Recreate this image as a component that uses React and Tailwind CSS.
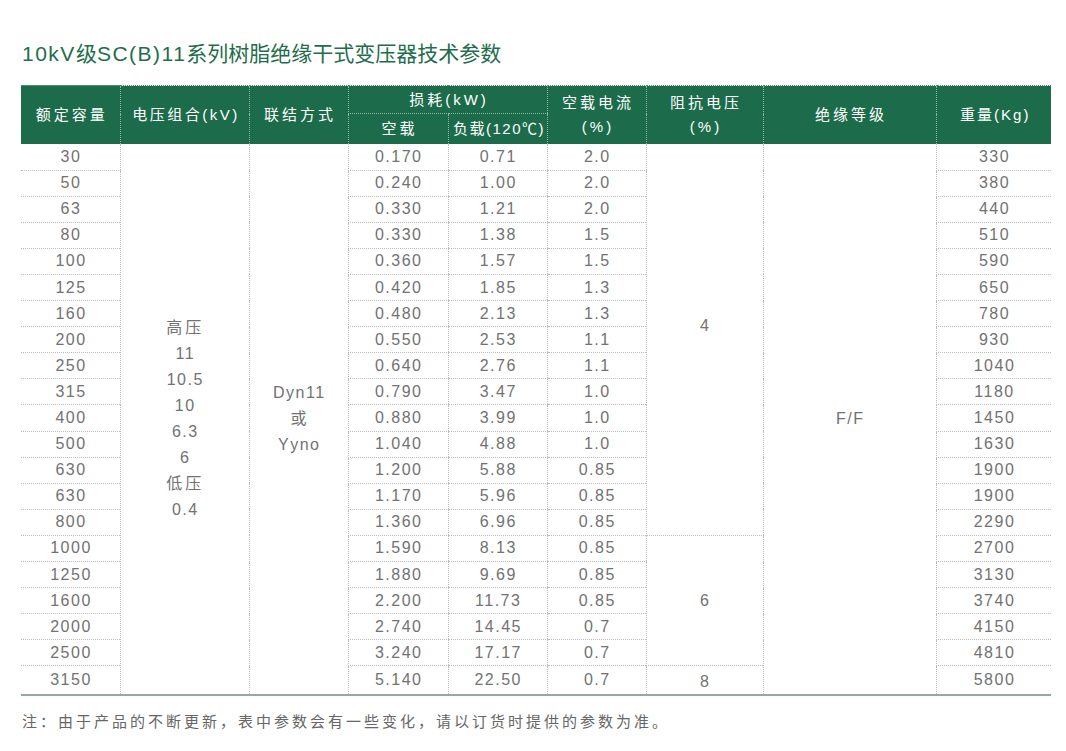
import React from "react";

const rows = [
  ["30", "0.170", "0.71", "2.0", "330"],
  ["50", "0.240", "1.00", "2.0", "380"],
  ["63", "0.330", "1.21", "2.0", "440"],
  ["80", "0.330", "1.38", "1.5", "510"],
  ["100", "0.360", "1.57", "1.5", "590"],
  ["125", "0.420", "1.85", "1.3", "650"],
  ["160", "0.480", "2.13", "1.3", "780"],
  ["200", "0.550", "2.53", "1.1", "930"],
  ["250", "0.640", "2.76", "1.1", "1040"],
  ["315", "0.790", "3.47", "1.0", "1180"],
  ["400", "0.880", "3.99", "1.0", "1450"],
  ["500", "1.040", "4.88", "1.0", "1630"],
  ["630", "1.200", "5.88", "0.85", "1900"],
  ["630", "1.170", "5.96", "0.85", "1900"],
  ["800", "1.360", "6.96", "0.85", "2290"],
  ["1000", "1.590", "8.13", "0.85", "2700"],
  ["1250", "1.880", "9.69", "0.85", "3130"],
  ["1600", "2.200", "11.73", "0.85", "3740"],
  ["2000", "2.740", "14.45", "0.7", "4150"],
  ["2500", "3.240", "17.17", "0.7", "4810"],
  ["3150", "5.140", "22.50", "0.7", "5800"],
];

const cell = "p-0 h-[26.1px] text-center align-middle pl-[1.5px]";
const bl = "border-l border-dotted border-l-[#bcbcbc]";
const bb = "border-b border-dotted border-b-[#bcbcbc]";
const hb = "border-l border-dotted border-l-[#8fb8a4]";
const th = "p-0 pl-[3px] font-normal align-middle whitespace-nowrap";
const tt = "border-t border-t-[#4f8f70]";

export default function App() {
  const last = rows.length - 1;
  return (
    <div
      className="w-[1066px] h-[751px] bg-white overflow-hidden"
      style={{ fontFamily: '"Liberation Sans", "Noto Sans CJK SC", sans-serif' }}
    >
      <div className="pt-[42px] pl-[22px] text-[21px] leading-[24px] text-[#1f6d4c]">
        <span className="tracking-[1.5px]">10kV</span>
        <span>级</span>
        <span className="tracking-[1.5px]">SC(B)11</span>
        <span>系列树脂绝缘干式变压器技术参数</span>
      </div>

      <table className="ml-[21px] mt-[19px] w-[1030px] table-fixed border-collapse">
        <colgroup>
          <col className="w-[99px]" />
          <col className="w-[129px]" />
          <col className="w-[99px]" />
          <col className="w-[100px]" />
          <col className="w-[99px]" />
          <col className="w-[99px]" />
          <col className="w-[117px]" />
          <col className="w-[173px]" />
          <col className="w-[115px]" />
        </colgroup>
        <thead className="bg-[#1c6b4a] text-white text-[15px] tracking-[3px]">
          <tr className="h-[28px]">
            <th rowSpan={2} className={`${th} ${tt}`}>额定容量</th>
            <th rowSpan={2} className={`${th} ${tt} ${hb} tracking-[2.5px]`}>电压组合(kV)</th>
            <th rowSpan={2} className={`${th} ${tt} ${hb}`}>联结方式</th>
            <th colSpan={2} className={`${th} ${tt} ${hb} h-[28px] leading-[27px] border-b border-dotted border-b-[#8fb8a4]`}>损耗(kW)</th>
            <th rowSpan={2} className={`${th} ${tt} ${hb} leading-[24px]`}>
              空载电流
              <br />
              (%)
            </th>
            <th rowSpan={2} className={`${th} ${tt} ${hb} leading-[24px]`}>
              阻抗电压
              <br />
              (%)
            </th>
            <th rowSpan={2} className={`${th} ${tt} ${hb}`}>绝缘等级</th>
            <th rowSpan={2} className={`${th} ${tt} ${hb} tracking-[2px]`}>重量(Kg)</th>
          </tr>
          <tr className="h-[30px]">
            <th className={`${th} ${hb} h-[30px] leading-[30px]`}>空载</th>
            <th className={`${th} ${hb} h-[30px] leading-[30px] tracking-[1.5px] pl-[0px]`}>负载(120℃)</th>
          </tr>
        </thead>
        <tbody className="text-[#727272] text-[16px] tracking-[1.5px]">
          {rows.map((r, i) => {
            const b = i === last ? "" : bb;
            return (
              <tr key={i}>
                <td className={`${cell} ${b}`}>{r[0]}</td>
                {i === 0 && (
                  <td rowSpan={21} className={`${cell} ${bl} leading-[26px]`}>
                    <div className="flex flex-col items-center">
                      <span className="tracking-[3px]">高压</span>
                      <span>11</span>
                      <span>10.5</span>
                      <span>10</span>
                      <span>6.3</span>
                      <span>6</span>
                      <span className="tracking-[3px]">低压</span>
                      <span>0.4</span>
                    </div>
                  </td>
                )}
                {i === 0 && (
                  <td rowSpan={21} className={`${cell} ${bl} leading-[26px]`}>
                    <div className="flex flex-col items-center">
                      <span>Dyn11</span>
                      <span>或</span>
                      <span>Yyno</span>
                    </div>
                  </td>
                )}
                <td className={`${cell} ${bl} ${b}`}>{r[1]}</td>
                <td className={`${cell} ${bl} ${b}`}>{r[2]}</td>
                <td className={`${cell} ${bl} ${b}`}>{r[3]}</td>
                {i === 0 && (
                  <td rowSpan={15} className={`${cell} ${bl} ${bb} pb-[26px]`}>4</td>
                )}
                {i === 15 && (
                  <td rowSpan={5} className={`${cell} ${bl} ${bb}`}>6</td>
                )}
                {i === 20 && <td className={`${cell} ${bl} pt-[4px]`}>8</td>}
                {i === 0 && (
                  <td rowSpan={21} className={`${cell} ${bl}`}>F/F</td>
                )}
                <td className={`${cell} ${bl} ${b}`}>{r[4]}</td>
              </tr>
            );
          })}
        </tbody>
      </table>
      <div className="ml-[21px] w-[1030px] h-[2px] bg-[#9aa8a3]" />

      <div className="mt-[16px] pl-[22px] text-[15px] leading-[20px] tracking-[3px] text-[#666666]">
        注：由于产品的不断更新，表中参数会有一些变化，请以订货时提供的参数为准。
      </div>
    </div>
  );
}
